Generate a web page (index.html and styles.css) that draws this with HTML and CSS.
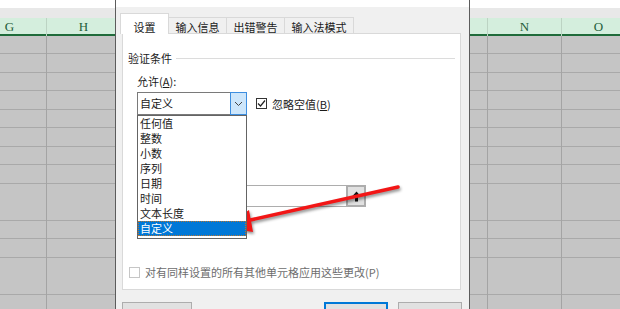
FILE: index.html
```html
<!DOCTYPE html>
<html lang="zh-CN">
<head>
    <meta charset="UTF-8">
    <meta name="viewport" content="width=device-width, initial-scale=1.0">
    <title>数据有效性</title>
    <link rel="stylesheet" href="styles.css">
</head>
<body>
    <!-- worksheet behind the dialog -->
    <div class="sheet">
        <div class="formula-bar"></div>
        <div class="columns">
            <div class="col"><div class="col-head">G</div><div class="cells"></div></div>
            <div class="col"><div class="col-head">H</div><div class="cells"></div></div>
            <div class="col"><div class="col-head">I</div><div class="cells"></div></div>
            <div class="col"><div class="col-head">J</div><div class="cells"></div></div>
            <div class="col"><div class="col-head">K</div><div class="cells"></div></div>
            <div class="col"><div class="col-head">L</div><div class="cells"></div></div>
            <div class="col narrow"><div class="col-head">M</div><div class="cells"></div></div>
            <div class="col"><div class="col-head">N</div><div class="cells"></div></div>
            <div class="col"><div class="col-head">O</div><div class="cells"></div></div>
        </div>
    </div>

    <!-- data validation dialog -->
    <div class="dialog">
        <div class="titlebar"></div>
        <div class="tabs">
            <div class="tab active">设置</div>
            <div class="tab">输入信息</div>
            <div class="tab">出错警告</div>
            <div class="tab">输入法模式</div>
        </div>

        <div class="panel">
            <div class="legend">验证条件</div>

            <div class="field-label">允许(<u>A</u>):</div>
            <div class="select-row">
                <div class="select-wrap">
                    <div class="select">
                        <span class="select-value">自定义</span>
                        <span class="select-btn">
                            <svg width="9" height="6" viewBox="0 0 9 6"><path d="M1 1 L4.5 4.5 L8 1" fill="none" stroke="#444" stroke-width="1"/></svg>
                        </span>
                    </div>
                    <ul class="list">
                        <li>任何值</li>
                        <li>整数</li>
                        <li>小数</li>
                        <li>序列</li>
                        <li>日期</li>
                        <li>时间</li>
                        <li>文本长度</li>
                        <li class="selected">自定义</li>
                    </ul>
                </div>
                <label class="check">
                    <span class="box">
                        <svg width="9" height="9" viewBox="0 0 9 9"><path d="M1 4.5 L3.5 7 L8 1.5" fill="none" stroke="#222" stroke-width="1.2"/></svg>
                    </span>
                    <span>忽略空值(<u>B</u>)</span>
                </label>
            </div>

            <div class="source-row">
                <div class="source-input"></div>
                <div class="source-btn">
                    <svg width="9" height="11" viewBox="0 0 9 11"><path d="M4.5 0.5 L8.8 5.2 L6 5.2 L6 10.5 L3 10.5 L3 5.2 L0.2 5.2 Z" fill="#111"/></svg>
                </div>
            </div>

            <label class="check apply-all">
                <span class="box disabled"></span>
                <span>对有同样设置的所有其他单元格应用这些更改(P)</span>
            </label>
        </div>

        <div class="buttons">
            <button class="btn wide"></button>
            <div class="btn-group">
                <button class="btn default"></button>
                <button class="btn"></button>
            </div>
        </div>
    </div>

    <!-- red annotation arrow -->
    <svg class="annotation" width="620" height="309" viewBox="0 0 620 309">
        <line x1="398" y1="187" x2="246" y2="221" stroke="#f21616" stroke-width="3.5" stroke-linecap="round"/>
        <polygon points="224,227 249,210 253,232" fill="#f21616"/>
    </svg>
</body>
</html>
```

FILE: styles.css
```css
body {
    margin: 0;
    width: 620px;
    height: 309px;
    overflow: hidden;
    position: relative;
    font-family: "Noto Sans CJK SC", "Noto Sans", sans-serif;
    font-size: 11px;
    color: #1a1a1a;
    background: #fff;
}

/* worksheet */
.formula-bar {
    height: 8px;
    background: #fff;
    border-bottom: 10px solid #e8e8e8;
}
.columns {
    display: flex;
    margin-left: -27px;
}
.col {
    flex: 0 0 74px;
    box-sizing: border-box;
    border-right: 1px solid #a4a4a4;
}
.col.narrow {
    flex-basis: 71px;
}
.col-head {
    height: 16px;
    background: #d4eedd;
    border-bottom: 2px solid #1f6b3a;
    box-shadow: 1px 0 0 #bcd3c3;
    font-family: "Liberation Serif", serif;
    font-size: 13px;
    line-height: 17px;
    text-align: center;
    color: #245d3a;
}
.cells {
    height: 280px;
    background: repeating-linear-gradient(to bottom, #c5c5c5 0, #c5c5c5 17.5px, #a9a9a9 17.5px, #a9a9a9 18.5px);
}

/* dialog */
.dialog {
    position: absolute;
    left: 115px;
    top: 0;
    width: 355px;
    height: 330px;
    box-sizing: border-box;
    background: #f0f0f0;
    border-left: 1px solid #5c5c5c;
    border-right: 1px solid #5c5c5c;
}
.titlebar {
    height: 7px;
    background: #fff;
}
.tabs {
    display: flex;
    align-items: flex-end;
    height: 21px;
    margin: 6px 0 0 4px;
}
.tab {
    flex: 0 0 auto;
    height: 16px;
    box-sizing: border-box;
    padding: 3px 6.5px 0;
    margin-bottom: 1px;
    border: 1px solid #d9d9d9;
    border-bottom: none;
    line-height: 13px;
    white-space: nowrap;
    text-align: center;
    background: #f0f0f0;
}
.tab + .tab {
    border-left: none;
}
.tab.active {
    height: 21px;
    min-width: 49px;
    margin-bottom: 0;
    padding-top: 7px;
    background: #fff;
    position: relative;
    z-index: 1;
}
.panel {
    position: relative;
    display: flex;
    flex-direction: column;
    width: 339px;
    height: 257px;
    box-sizing: border-box;
    margin: -1px 0 0 6px;
    padding: 0 0 10px;
    background: #fff;
    border: 1px solid #d9d9d9;
}
.legend {
    display: flex;
    align-items: center;
    gap: 4px;
    margin: 17px 5px 0;
    line-height: 14px;
}
.legend::after {
    content: "";
    flex: 1;
    height: 1px;
    background: #dcdcdc;
}
.field-label {
    margin: 9px 0 0 14px;
    line-height: 14px;
}
.select-row {
    display: flex;
    align-items: center;
    margin: 4px 0 0 14px;
}
.select-wrap {
    position: relative;
    z-index: 2;
}
.select {
    display: flex;
    width: 110px;
    height: 23px;
    box-sizing: border-box;
    border: 1px solid #7a7a7a;
    background: #fff;
}
.select-value {
    flex: 1;
    padding-left: 2px;
    line-height: 21px;
}
.select-btn {
    display: flex;
    align-items: center;
    justify-content: center;
    width: 15px;
    margin: -1px -1px -1px 0;
    border: 1px solid #3d8ee0;
    background: #cde6fb;
}
.list {
    position: absolute;
    top: 23px;
    left: 0;
    width: 110px;
    box-sizing: border-box;
    margin: 0;
    padding: 0 0 2px;
    list-style: none;
    background: #fff;
    border: 1px solid #646464;
}
.list li {
    height: 15px;
    padding-left: 2px;
    line-height: 15px;
}
.list li.selected {
    background: #0078d7;
    color: #fff;
    outline: 1px dotted #b8742f;
    outline-offset: -1px;
}
.check {
    display: flex;
    align-items: center;
    gap: 5px;
    margin-left: 9px;
    line-height: 14px;
}
.box {
    display: flex;
    align-items: center;
    justify-content: center;
    width: 11px;
    height: 11px;
    box-sizing: border-box;
    border: 1px solid #333;
    background: #fff;
}
.box.disabled {
    border-color: #c6c6c6;
}
.source-row {
    display: flex;
    margin: 70px 0 0 14px;
}
.source-input {
    width: 209px;
    height: 22px;
    box-sizing: border-box;
    border: 1px solid #adadad;
    border-right: none;
}
.source-btn {
    display: flex;
    align-items: center;
    justify-content: center;
    width: 20px;
    height: 22px;
    box-sizing: border-box;
    border: 2px solid #adadad;
    background: #e1e1e1;
}
.apply-all {
    margin: auto 0 0 6px;
    color: #6d6d6d;
}
.buttons {
    display: flex;
    justify-content: space-between;
    margin: 12px 7px 0 6px;
}
.btn-group {
    display: flex;
    gap: 10px;
}
.btn {
    width: 64px;
    height: 23px;
    padding: 0;
    border: 1px solid #adadad;
    background: #e1e1e1;
}
.btn.wide {
    width: 70px;
}
.btn.default {
    border: 2px solid #0078d7;
}

/* annotation */
.annotation {
    position: absolute;
    left: 0;
    top: 0;
    pointer-events: none;
    filter: drop-shadow(1px 2px 1.5px rgba(0, 0, 0, 0.45));
}
```
